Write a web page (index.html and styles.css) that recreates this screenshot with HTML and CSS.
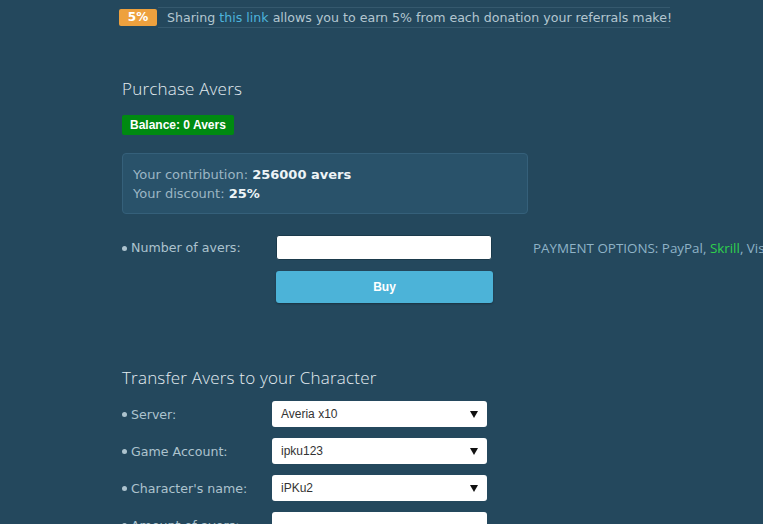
FILE: index.html
```html
<!DOCTYPE html>
<html>
<head>
<meta charset="utf-8">
<link rel="stylesheet" href="styles.css">
</head>
<body>
<div class="page">
  <div class="referral">
    <span class="pct">5%</span>
    <p class="ref-text">Sharing <a class="link" href="#">this link</a> allows you to earn 5% from each donation your referrals make!</p>
  </div>

  <section class="purchase">
    <h2 class="title">Purchase Avers</h2>
    <div class="balance">Balance: 0 Avers</div>
    <div class="info">
      <div>Your contribution: <b>256000 avers</b></div>
      <div>Your discount: <b>25%</b></div>
    </div>
    <div class="buy-row">
      <div class="buy-form">
        <div class="field">
          <label class="label">Number of avers:</label>
          <input class="input" type="text">
        </div>
        <div class="field">
          <span class="label"></span>
          <button class="buy">Buy</button>
        </div>
      </div>
      <div class="payment">PAYMENT OPTIONS: PayPal, <span class="skrill">Skrill</span>, Visa, MasterCard</div>
    </div>
  </section>

  <section class="transfer">
    <h2 class="title">Transfer Avers to your Character</h2>
    <div class="trow">
      <label class="label">Server:</label>
      <div class="select"><span>Averia x10</span><i class="arrow"></i></div>
    </div>
    <div class="trow">
      <label class="label">Game Account:</label>
      <div class="select"><span>ipku123</span><i class="arrow"></i></div>
    </div>
    <div class="trow">
      <label class="label">Character's name:</label>
      <div class="select"><span>iPKu2</span><i class="arrow"></i></div>
    </div>
    <div class="trow">
      <label class="label">Amount of avers:</label>
      <div class="select plain"></div>
    </div>
  </section>
</div>
</body>
</html>
```

FILE: styles.css
```css
html, body {
  margin: 0;
  padding: 0;
  background: #24485d;
  overflow: hidden;
  height: 524px;
}
body {
  font-family: "DejaVu Sans", Verdana, sans-serif;
  font-size: 12.6px;
  color: #adc3ce;
}
.page {
  padding-left: 122px;
  width: 641px;
  white-space: nowrap;
}
.referral {
  display: flex;
  align-items: center;
  margin-left: -3px;
  padding-top: 7px;
  gap: 1px;
}
.pct {
  background: #eea13e;
  color: #fff;
  font-weight: bold;
  font-size: 12px;
  line-height: 17px;
  width: 38px;
  text-align: center;
  border-radius: 2px;
}
.ref-text {
  margin: 0;
  padding: 0 0 0 9px;
  border-top: 1px solid #35596e;
  border-bottom: 1px solid #35596e;
  line-height: 19px;
  color: #b3c6d0;
  width: 503px;
}
.link {
  color: #4db3dc;
  text-decoration: none;
}
.purchase {
  padding-top: 50px;
}
.title {
  margin: 0;
  font-family: "Open Sans", sans-serif;
  font-weight: 300;
  font-size: 17px;
  line-height: 22px;
  color: #e3ecf1;
  letter-spacing: 0.2px;
}
.balance {
  display: inline-block;
  margin-top: 15px;
  background: #008a11;
  color: #fff;
  font-family: "Liberation Sans", Arial, sans-serif;
  font-weight: bold;
  font-size: 12px;
  line-height: 20px;
  padding: 0 8px;
  border-radius: 2px;
}
.info {
  margin-top: 18px;
  width: 384px;
  padding: 11px 10px 10px;
  background: #29526a;
  border: 1px solid #35607a;
  border-radius: 4px;
  line-height: 19px;
  color: #9cb6c4;
  font-size: 13px;
}
.info b {
  color: #eef4f7;
}
.buy-row {
  display: flex;
  margin-top: 21px;
}
.buy-form {
  display: flex;
  flex-direction: column;
  gap: 11px;
}
.field {
  display: flex;
  align-items: center;
}
.label {
  display: block;
  width: 154px;
  color: #adc3ce;
  position: relative;
  padding-left: 9px;
  box-sizing: border-box;
}
.label:empty::before { display: none; }
.label::before {
  content: "";
  position: absolute;
  left: 0;
  top: calc(50% - 2px);
  width: 5px;
  height: 5px;
  border-radius: 50%;
  background: #adc3ce;
}
.input {
  width: 216px;
  height: 25px;
  box-sizing: border-box;
  border: 1px solid #1b3a4b;
  border-radius: 3px;
  background: #fff;
  margin: 0;
}
.buy {
  width: 217px;
  height: 32px;
  border: none;
  border-radius: 3px;
  background: #4cb3d8;
  color: #fff;
  font-family: "Liberation Sans", Arial, sans-serif;
  font-weight: bold;
  font-size: 12px;
  box-shadow: 0 1px 2px rgba(0,0,0,0.3);
  margin: 0;
}
.payment {
  margin-left: 40px;
  margin-top: 4px;
  color: #8fb3c7;
  font-family: "Open Sans", sans-serif;
  font-size: 13.4px;
}
.skrill {
  color: #2fcf4c;
}
.transfer {
  padding-top: 64px;
}
.transfer .title {
  font-size: 17px;
  margin-bottom: 12px;
}
.trow {
  display: flex;
  align-items: center;
  margin-bottom: 11px;
}
.trow .label {
  width: 150px;
}
.select {
  width: 215px;
  height: 26px;
  box-sizing: border-box;
  background: #fff;
  border-radius: 3px;
  display: flex;
  align-items: center;
  justify-content: space-between;
  padding: 0 9px 0 9px;
  font-family: "Liberation Sans", Arial, sans-serif;
  font-size: 12px;
  color: #333;
}
.arrow {
  width: 0;
  height: 0;
  border-left: 4px solid transparent;
  border-right: 4px solid transparent;
  border-top: 7px solid #111;
}
```
